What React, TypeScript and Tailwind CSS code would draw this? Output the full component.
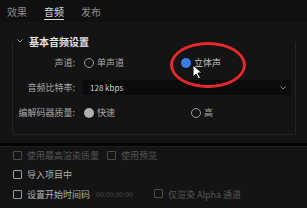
import React from 'react';

const Radio = ({ checked, color }: { checked?: boolean; color?: string }) =>
  checked ? (
    <span className={`inline-block w-[10px] h-[10px] rounded-full ${color}`} />
  ) : (
    <span className="inline-block w-[10px] h-[10px] rounded-full border-[1.5px] border-[#9a9a9a]" />
  );

const Check = ({ dim }: { dim?: boolean }) => (
  <span
    className={`inline-block w-[9px] h-[9px] rounded-[1px] border-[1.5px] ${
      dim ? 'border-[#4a4a4a]' : 'border-[#9a9a9a]'
    }`}
  />
);

export default function App() {
  return (
    <div
      className="relative w-[307px] h-[208px] overflow-hidden bg-[#141414] text-[#a8a8a8]"
      style={{ fontFamily: '"Noto Sans CJK SC", "Noto Sans", sans-serif' }}
    >
      {/* tabs */}
      <div className="flex h-[22px] items-start pl-[7px] gap-[17px] bg-[#101010] text-[10px] leading-none">
        <span className="pt-[7px] text-[#8a8a8a]">效果</span>
        <span className="pt-[7px] text-[#d8d8d8] border-b-[1.5px] border-[#d8d8d8] pb-[2px]">音频</span>
        <span className="pt-[7px] text-[#8a8a8a]">发布</span>
      </div>

      {/* section header */}
      <div className="flex items-center h-[16px] mt-[12px] pl-[17px] gap-[6px]">
        <svg width="6" height="4" viewBox="0 0 6 4" className="mt-[-2px]">
          <path d="M0.5 0.5 L3 3 L5.5 0.5" stroke="#a0a0a0" strokeWidth="1" fill="none" />
        </svg>
        <span className="text-[10px] font-bold text-[#e2e2e2] leading-none">基本音频设置</span>
      </div>

      {/* panel */}
      <div className="ml-[12px] -mt-[8px] w-[284px] h-[93px] pt-[8px] border border-[#242424] border-t-0 rounded-b-[2px] text-[9px] leading-none">
        <div className="flex items-center h-[25px]">
          <span className="w-[66px] text-right pr-[4px]">声道:</span>
          <span className="flex items-center gap-[3px] ml-[5px]">
            <Radio />
            <span>单声道</span>
          </span>
          <span className="flex items-center gap-[3px] ml-[57px] text-[#c4c4c4]">
            <Radio checked color="bg-[#3b7be8]" />
            <span>立体声</span>
          </span>
        </div>
        <div className="flex items-center h-[25px]">
          <span className="w-[66px] text-right pr-[4px]">音频比特率:</span>
          <div className="ml-[4px] flex items-center justify-between w-[208px] h-[15px] bg-[#0b0b0b] pl-[7px] pr-[5px]">
            <span className="text-[8px] text-[#d0d0d0]">128 kbps</span>
            <svg width="6" height="4" viewBox="0 0 6 4">
              <path d="M0.5 0.5 L3 3 L5.5 0.5" stroke="#8a8a8a" strokeWidth="1" fill="none" />
            </svg>
          </div>
        </div>
        <div className="flex items-center h-[25px]">
          <span className="w-[66px] text-right pr-[4px]">编解码器质量:</span>
          <span className="flex items-center gap-[3px] ml-[5px]">
            <Radio checked color="bg-[#b0b0b0]" />
            <span>快速</span>
          </span>
          <span className="flex items-center gap-[3px] ml-[76px]">
            <Radio />
            <span>高</span>
          </span>
        </div>
      </div>

      {/* separator */}
      <div className="mt-[8px] h-[3px] bg-[#050505]" />
      <div className="h-[1px] bg-[#1d1d1d]" />

      {/* checkboxes */}
      <div className="pl-[13px] text-[9px] leading-none">
        <div className="flex items-center h-[17px] gap-[5px] text-[#555]">
          <Check dim />
          <span>使用最高渲染质量</span>
          <span className="ml-[3px]"><Check dim /></span>
          <span>使用预览</span>
        </div>
        <div className="flex items-center h-[20px] gap-[5px] text-[#b0b0b0]">
          <Check />
          <span>导入项目中</span>
        </div>
        <div className="flex items-center h-[20px] gap-[5px]">
          <Check />
          <span className="text-[#b0b0b0]">设置开始时间码</span>
          <span className="text-[7px] text-[#4a4a4a] ml-[1px]">00:00:00:00</span>
          <span className="ml-[16px]"><Check dim /></span>
          <span className="text-[#555]">仅渲染 Alpha 通道</span>
        </div>
      </div>

      {/* red ellipse annotation */}
      <div className="absolute left-[170px] top-[42px] w-[76px] h-[46px] rounded-[50%] border-[3px] border-[#e8282a]" />

      {/* cursor */}
      <svg className="absolute left-[192px] top-[64px]" width="11" height="16" viewBox="0 0 11 16">
        <path d="M1 1 L1 13 L4 10 L6.5 15 L8.5 14 L6 9 L10 9 Z" fill="#ffffff" stroke="#000" strokeWidth="1" />
      </svg>
    </div>
  );
}
